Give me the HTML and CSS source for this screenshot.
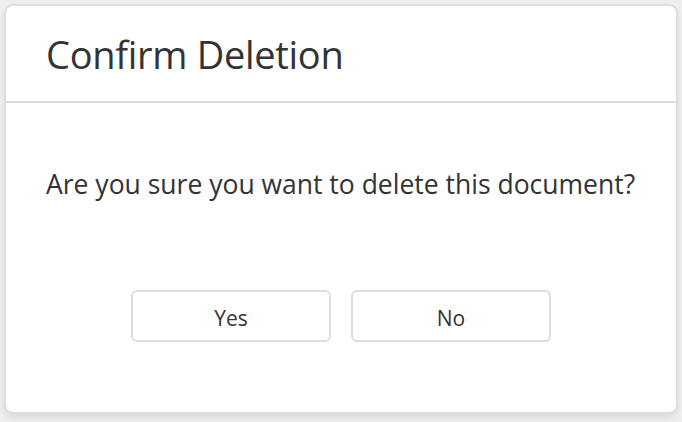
FILE: index.html
```html
<!DOCTYPE html>
<html lang="en">
<head>
<meta charset="utf-8">
<title>Confirm Deletion</title>
<link rel="stylesheet" href="styles.css">
</head>
<body>
<div class="backdrop">
  <div class="dialog" role="dialog" aria-labelledby="dlg-title">
    <header class="dialog-header">
      <h1 id="dlg-title" class="dialog-title">Confirm Deletion</h1>
    </header>
    <div class="dialog-body">
      <p class="dialog-message">Are you sure you want to delete this document?</p>
      <div class="dialog-actions">
        <button class="btn" type="button">Yes</button>
        <button class="btn" type="button">No</button>
      </div>
    </div>
  </div>
</div>
</body>
</html>
```
FILE: styles.css
```css
html, body {
  margin: 0;
  padding: 0;
  height: 100%;
}

body {
  background: #eeeeee;
  font-family: "Open Sans", "Noto Sans", "Liberation Sans", sans-serif;
  color: #333333;
}

.backdrop {
  padding: 4px 4px 8px 4px;
  height: 100%;
  box-sizing: border-box;
}

.dialog {
  height: 410px;
  box-sizing: border-box;
  background: #ffffff;
  border: 2px solid #dedede;
  border-radius: 9px;
  box-shadow: 0 4px 6px rgba(0, 0, 0, 0.08);
  display: flex;
  flex-direction: column;
}

.dialog-header {
  height: 95px;
  border-bottom: 2px solid #dddddd;
  display: flex;
  align-items: center;
  padding: 0 40px;
}

.dialog-title {
  margin: 0;
  font-size: 38px;
  font-weight: 400;
  color: #333333;
  letter-spacing: -0.3px;
}

.dialog-body {
  flex: 1;
  padding: 0 40px;
  display: flex;
  flex-direction: column;
}

.dialog-message {
  margin: 64px 0 0;
  font-size: 26.5px;
  line-height: 34px;
  color: #333333;
}

.dialog-actions {
  margin-top: 89px;
  display: flex;
  justify-content: center;
  gap: 20px;
}

.btn {
  width: 200px;
  height: 52px;
  background: #ffffff;
  border: 2px solid #dddddd;
  border-radius: 6px;
  font-family: inherit;
  font-size: 21px;
  color: #333333;
  padding: 4px 0 0;
}
```
